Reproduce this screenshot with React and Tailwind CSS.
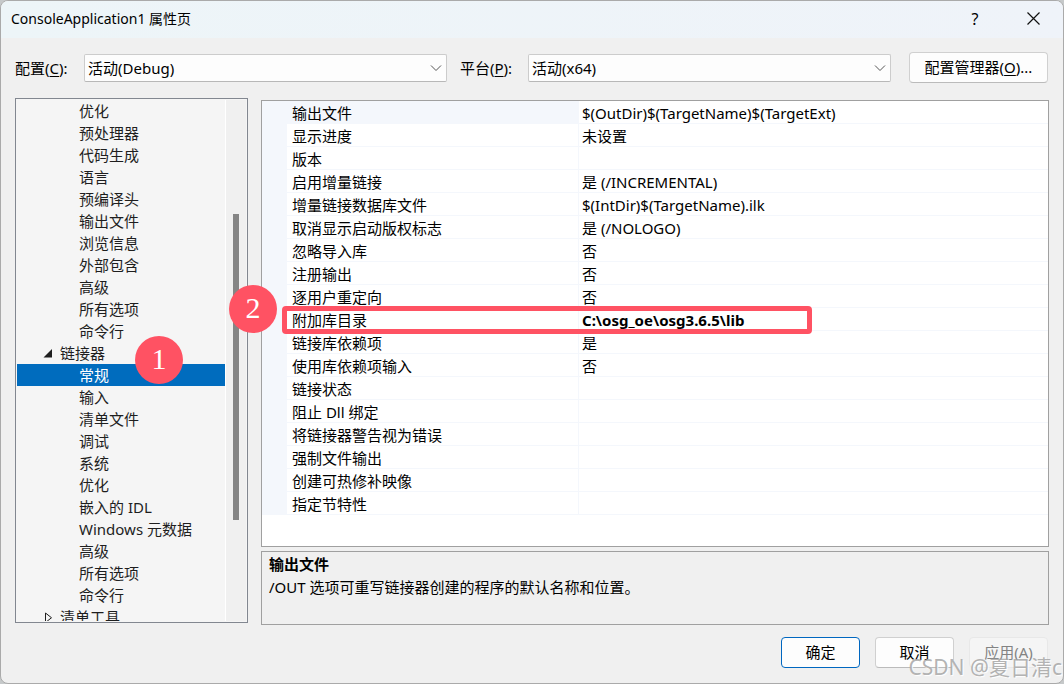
const treeItems = [
  { label: '优化' },
  { label: '预处理器' },
  { label: '代码生成' },
  { label: '语言' },
  { label: '预编译头' },
  { label: '输出文件' },
  { label: '浏览信息' },
  { label: '外部包含' },
  { label: '高级' },
  { label: '所有选项' },
  { label: '命令行' },
  { label: '链接器', group: 'open' },
  { label: '常规', selected: true, step: 1 },
  { label: '输入' },
  { label: '清单文件' },
  { label: '调试' },
  { label: '系统' },
  { label: '优化' },
  { label: '嵌入的 IDL' },
  { label: 'Windows 元数据' },
  { label: '高级' },
  { label: '所有选项' },
  { label: '命令行' },
  { label: '清单工具', group: 'closed' },
];

const properties = [
  ['输出文件', '$(OutDir)$(TargetName)$(TargetExt)'],
  ['显示进度', '未设置'],
  ['版本', ''],
  ['启用增量链接', '是 (/INCREMENTAL)'],
  ['增量链接数据库文件', '$(IntDir)$(TargetName).ilk'],
  ['取消显示启动版权标志', '是 (/NOLOGO)'],
  ['忽略导入库', '否'],
  ['注册输出', '否'],
  ['逐用户重定向', '否'],
  ['附加库目录', 'C:\\osg_oe\\osg3.6.5\\lib'],
  ['链接库依赖项', '是'],
  ['使用库依赖项输入', '否'],
  ['链接状态', ''],
  ['阻止 Dll 绑定', ''],
  ['将链接器警告视为错误', ''],
  ['强制文件输出', ''],
  ['创建可热修补映像', ''],
  ['指定节特性', ''],
];

function StepBadge({ number, className }) {
  return (
    <span
      className={`absolute z-10 flex size-12 items-center justify-center rounded-full bg-[#ff5263] pb-0.5 font-['Liberation_Serif',serif] text-[30px] leading-none font-normal text-white ${className}`}
    >
      {number}
    </span>
  );
}

function TitleBar() {
  return (
    <header className="flex h-[37px] shrink-0 items-center justify-between bg-linear-to-r from-[#edf5f8] to-[#eff3f9] pl-2.5">
      <h1 className="pb-0.5 text-sm">ConsoleApplication1 属性页</h1>
      <div className="flex h-full pb-0.5">
        <button type="button" aria-label="帮助" className="flex w-14 items-center justify-center text-base">
          ?
        </button>
        <button type="button" aria-label="关闭" className="flex w-[60px] items-center justify-center">
          <svg width="13" height="13" viewBox="0 0 13 13" fill="none" stroke="#111" strokeWidth="1.2">
            <path d="M0.5 0.5 12.5 12.5M12.5 0.5 0.5 12.5" />
          </svg>
        </button>
      </div>
    </header>
  );
}

function ComboBox({ id, value }) {
  return (
    <div className="relative min-w-0 flex-1">
      <select
        id={id}
        defaultValue={value}
        className="block h-7 w-full appearance-none rounded-xs border border-[#cccccc] border-b-[#b8b8b8] bg-[#fdfdfd] pr-6 pl-[3px]"
      >
        <option>{value}</option>
      </select>
      <svg
        className="pointer-events-none absolute top-1/2 right-[5px] -translate-y-1/2"
        width="12"
        height="6"
        viewBox="0 0 12 6"
        fill="none"
        stroke="#555"
      >
        <path d="M1 0.5 6 5.5 11 0.5" />
      </svg>
    </div>
  );
}

function Toolbar() {
  return (
    <div className="flex h-[59px] shrink-0 items-center pr-[15px] pl-3.5">
      <label htmlFor="configuration" className="w-[69px] shrink-0">
        配置(<u className="underline-offset-2">C</u>):
      </label>
      <ComboBox id="configuration" value="活动(Debug)" />
      <label htmlFor="platform" className="ml-[13px] w-[68px] shrink-0">
        平台(<u className="underline-offset-2">P</u>):
      </label>
      <ComboBox id="platform" value="活动(x64)" />
      <button
        type="button"
        className="ml-[18px] h-[31px] w-[139px] shrink-0 rounded border border-[#d0d0d0] border-b-[#bbbbbb] bg-[#fdfdfd] pb-0.5"
      >
        配置管理器(<u className="underline-offset-2">O</u>)...
      </button>
    </div>
  );
}

function Expander({ open }) {
  return (
    <svg className="mr-1.5 ml-[26px] shrink-0" width="11" height="11" viewBox="0 0 11 11">
      {open ? (
        <path d="M9 1V9.5H0.5Z" fill="#1e1e1e" />
      ) : (
        <path d="M2.5 1V10.5L8.5 5.75Z" fill="none" stroke="#1e1e1e" />
      )}
    </svg>
  );
}

function TreeItem({ item }) {
  return (
    <li className="relative">
      <button
        type="button"
        className={`flex h-[22px] w-full items-center text-left whitespace-nowrap ${
          item.selected ? 'bg-[#006cbe] text-white' : 'text-[#1e1e1e]'
        }`}
      >
        {item.group ? <Expander open={item.group === 'open'} /> : <span className="w-[62px] shrink-0" />}
        {item.label}
      </button>
      {item.step && <StepBadge number={item.step} className="-top-7 left-[118px]" />}
    </li>
  );
}

function TreePanel() {
  return (
    <nav className="mb-0.5 -mt-0.5 flex w-[233px] shrink-0 border border-[#828790] bg-[#f5f5f5] p-px">
      <ul className="min-w-0 flex-1 overflow-hidden">
        {treeItems.map((item, index) => (
          <TreeItem key={index} item={item} />
        ))}
      </ul>
      <div className="flex w-[21px] flex-col items-center border-l border-white bg-[#f0f0f0]">
        <div className="grow-[114]" />
        <div className="w-1.5 grow-[306] bg-[#858585]" />
        <div className="grow-[101]" />
      </div>
    </nav>
  );
}

function PropertyGrid() {
  return (
    <div className="flex-1 border border-[#a0a0a0] bg-white">
      <table className="w-full table-fixed border-separate border-spacing-0 text-left">
        <colgroup>
          <col className="w-[25px]" />
          <col className="w-[292px]" />
          <col />
        </colgroup>
        <tbody>
          {properties.map(([name, value], index) => {
            const marked = name === '附加库目录';
            return (
              <tr key={name} className="relative h-[23px] leading-5">
                <td className="bg-[#f4f7fc] p-0">
                  {marked && (
                    <>
                      <span className="absolute -top-0.5 right-[236px] left-5 z-10 h-7 rounded border-5 border-[#ff5263]" />
                      <StepBadge number={2} className="-top-[23px] -left-[33px]" />
                    </>
                  )}
                </td>
                <th
                  scope="row"
                  className={`border-r border-b border-[#f4f7fc] pt-0.5 pr-0 pb-0 pl-[5px] font-normal ${
                    index === 0 ? 'bg-[#f4f7fc]' : ''
                  }`}
                >
                  {name}
                </th>
                <td className={`border-b border-[#f4f7fc] pt-0.5 pr-0 pb-0 pl-[3px] ${marked ? 'font-bold' : ''}`}>
                  {value}
                </td>
              </tr>
            );
          })}
        </tbody>
      </table>
    </div>
  );
}

function Description() {
  return (
    <section className="mt-1 h-[74px] shrink-0 border border-[#a0a0a0] px-[7px] py-px leading-[23px]">
      <h2 className="font-bold">输出文件</h2>
      <p>/OUT 选项可重写链接器创建的程序的默认名称和位置。</p>
    </section>
  );
}

function Footer() {
  return (
    <footer className="flex shrink-0 justify-end gap-[15px] pt-3 pr-[15px] pb-[15px]">
      <button type="button" className="h-[31px] w-[79px] rounded border border-[#0067c0] bg-[#fdfdfd] pb-0.5">
        确定
      </button>
      <button
        type="button"
        className="h-[31px] w-[79px] rounded border border-[#d0d0d0] border-b-[#bbbbbb] bg-[#fdfdfd] pb-0.5"
      >
        取消
      </button>
      <button
        type="button"
        disabled
        className="h-[31px] w-[79px] rounded border border-[#e8e8e8] bg-[#f5f5f5] pb-0.5 text-[#838383]"
      >
        应用(<u className="underline-offset-2">A</u>)
      </button>
    </footer>
  );
}

export default function App() {
  return (
    <div className="relative h-screen overflow-hidden bg-[#c6c9ca] font-['Noto_Sans','Noto_Sans_CJK_SC',sans-serif] text-[15px] leading-[22px] text-black">
      <div className="flex h-full flex-col overflow-hidden rounded-lg border border-[#aaaaaa] bg-[#f0f0f0]">
        <TitleBar />
        <Toolbar />
        <main className="flex min-h-0 flex-1 gap-[13px] pt-[3px] pr-3.5 pl-3.5">
          <TreePanel />
          <div className="flex min-w-0 flex-1 flex-col">
            <PropertyGrid />
            <Description />
          </div>
        </main>
        <Footer />
      </div>
      <div className="pointer-events-none absolute right-0.5 bottom-[5px] text-[21px] leading-6 whitespace-nowrap text-[#a0a0a0]/80 [text-shadow:1px_1px_1px_#ffffff]">
        CSDN @夏日清c
      </div>
    </div>
  );
}
